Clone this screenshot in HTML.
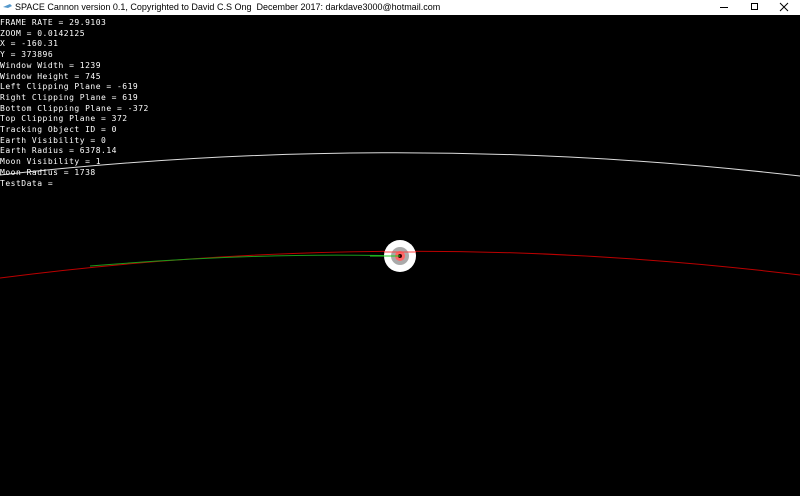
<!DOCTYPE html>
<html><head><style>
html,body{margin:0;padding:0;background:#000;width:800px;height:496px;overflow:hidden}
#tb{position:absolute;left:0;top:0;width:800px;height:15px;background:#fff;font:9px "Liberation Sans",sans-serif;color:#000}
#tb span{position:absolute;left:15px;top:2px}
#txt{position:absolute;left:0;top:18px;font:8px "DejaVu Sans Mono","Liberation Mono",monospace;color:#fff;letter-spacing:0.5px;line-height:10.7px;white-space:pre}
svg{position:absolute;left:0;top:0}
</style></head><body>
<div id="tb"><span>SPACE Cannon version 0.1, Copyrighted to David C.S Ong&nbsp; December 2017: darkdave3000@hotmail.com</span></div>
<svg width="800" height="496">
<path d="M0 175 Q400 130 800 176" stroke="#ddd" stroke-width="1" fill="none"/>
<path d="M0 278 Q400 226 800 275" stroke="#b00" stroke-width="1" fill="none"/>
<path d="M90 266 Q260 252 400 256" stroke="#1a9a1a" stroke-width="1" fill="none"/>
<circle cx="400" cy="256" r="16" fill="#fff"/>
<circle cx="400" cy="256" r="9" fill="#aaa"/>
<circle cx="400" cy="256" r="5" fill="#f66"/>
<circle cx="400" cy="256" r="2" fill="#300"/>
<line x1="384" y1="252" x2="416" y2="252" stroke="#f44" stroke-width="1"/>
<line x1="370" y1="256" x2="400" y2="256" stroke="#2c2" stroke-width="1"/>
<path d="M3 7 L10 4 L12 6 L8 8 Z" fill="#59c"/>
<g stroke="#000" stroke-width="1" fill="none"><line x1="720" y1="7.5" x2="728" y2="7.5"/><rect x="751.5" y="3.5" width="6" height="6"/><path d="M780 3 L788 11 M788 3 L780 11"/></g>
</svg>
<div id="txt">FRAME RATE = 29.9103
ZOOM = 0.0142125
X = -160.31
Y = 373896
Window Width = 1239
Window Height = 745
Left Clipping Plane = -619
Right Clipping Plane = 619
Bottom Clipping Plane = -372
Top Clipping Plane = 372
Tracking Object ID = 0
Earth Visibility = 0
Earth Radius = 6378.14
Moon Visibility = 1
Moon Radius = 1738
TestData =</div>
</body></html>
